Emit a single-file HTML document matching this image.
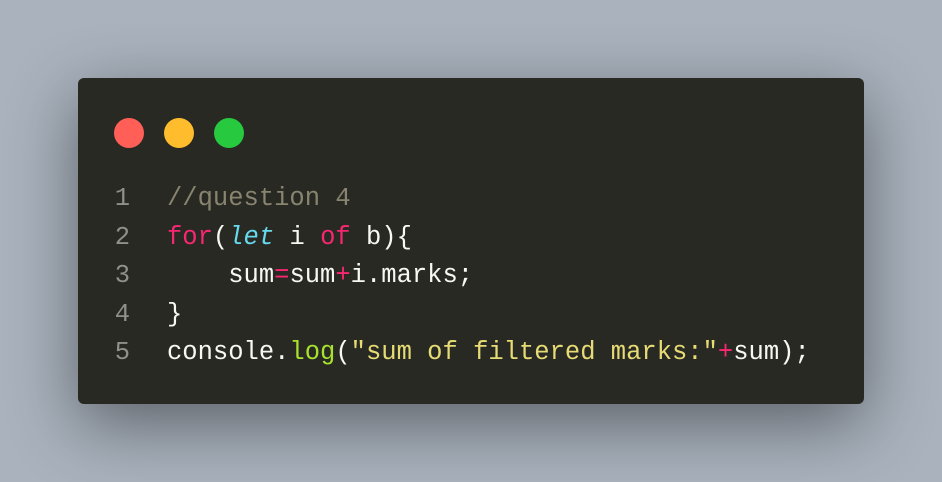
<!DOCTYPE html>
<html><head><style>
html,body{margin:0;padding:0}
body{width:942px;height:482px;background:#a9b2bd;position:relative;overflow:hidden;font-family:"Liberation Mono",monospace}
.win{position:absolute;left:78px;top:78px;width:786px;height:326px;background:#282923;border-radius:6px;box-shadow:0 20px 68px rgba(0,0,0,0.45)}
.dot{position:absolute;top:40px;width:30px;height:30px;border-radius:50%}
.code{position:absolute;left:0;top:102px;font-size:25.5px;line-height:38.5px;color:#f8f8f2;white-space:pre}
.ln{display:inline-block;width:52px;text-align:right;color:#8f908a;margin-right:37px}
.c{color:#88846f}.k{color:#f92672}.t{color:#66d9ef;font-style:italic}.f{color:#a6e22e}.s{color:#e6db74}
</style></head><body>
<div class="win">
<div class="dot" style="left:36px;background:#ff5f56"></div>
<div class="dot" style="left:86px;background:#ffbd2e"></div>
<div class="dot" style="left:136px;background:#27c93f"></div>
<div class="code"><div><span class="ln">1</span><span class="c">//question 4</span></div><div><span class="ln">2</span><span class="k">for</span>(<span class="t">let</span> i <span class="k">of</span> b){</div><div><span class="ln">3</span>    sum<span class="k">=</span>sum<span class="k">+</span>i.marks;</div><div><span class="ln">4</span>}</div><div><span class="ln">5</span>console.<span class="f">log</span>(<span class="s">"sum of filtered marks:"</span><span class="k">+</span>sum);</div></div>
</div>
</body></html>
